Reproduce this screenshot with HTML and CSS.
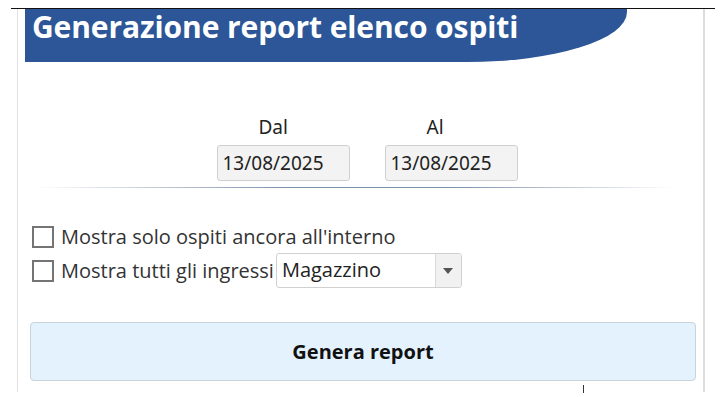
FILE: index.html
```html
<!DOCTYPE html>
<html lang="it">
<head>
  <meta charset="UTF-8">
  <meta name="viewport" content="width=device-width, initial-scale=1.0">
  <title>Generazione report elenco ospiti</title>
  <link rel="stylesheet" href="styles.css">
</head>
<body>

  <div class="topline"></div>

  <!-- Report panel -->
  <div class="panel">
    <div class="panel-header">
      <h1>Generazione report elenco ospiti</h1>
    </div>

    <div class="dates">
      <div class="date-field">
        <label for="date-from">Dal</label>
        <input type="text" id="date-from" value="13/08/2025" />
      </div>
      <div class="date-field">
        <label for="date-to">Al</label>
        <input type="text" id="date-to" value="13/08/2025" />
      </div>
    </div>

    <div class="separator"></div>

    <div class="option-row first">
      <input type="checkbox" id="only-inside" />
      <label for="only-inside">Mostra solo ospiti ancora all'interno</label>
    </div>
    <div class="option-row">
      <input type="checkbox" id="all-entries" />
      <label for="all-entries">Mostra tutti gli ingressi</label>
      <div class="select">
        <span class="select-value">Magazzino</span>
        <span class="select-arrow"></span>
      </div>
    </div>

    <button type="button" class="generate">Genera report</button>
  </div>

  <div class="tick"></div>

</body>
</html>
```

FILE: styles.css
```css
* { margin: 0; padding: 0; box-sizing: border-box; }
body {
  font-family: "Open Sans", Arial, sans-serif;
  background: white;
  color: #222;
  padding-top: 8px;
  overflow: hidden;
}
.topline {
  margin-left: 11px;
  width: 704px;
  border-top: 1px solid #111;
}
.panel {
  margin-left: 17px;
  width: 688px;
  height: 383px;
  border-left: 1px solid #e2e2e2;
  border-right: 2px solid #dcdcdc;
  padding: 0 7px;
}
.panel-header {
  width: 602px;
  height: 53px;
  background: #2c5697;
  border-bottom-right-radius: 160px 50px;
}
.panel-header h1 {
  font-size: 30px;
  font-weight: 700;
  line-height: 36px;
  color: white;
  padding-left: 7px;
  letter-spacing: -0.1px;
}
.dates {
  display: flex;
  justify-content: center;
  gap: 35px;
  margin-top: 53px;
  padding-left: 13px;
}
.date-field { display: flex; flex-direction: column; }
.date-field label {
  font-family: "Noto Sans", sans-serif;
  font-size: 19px;
  line-height: 24px;
  color: #222;
  padding-left: 42px;
}
.date-field input {
  margin-top: 6px;
  width: 133px;
  height: 36px;
  padding: 0 5px;
  font-family: "Noto Sans", sans-serif;
  font-size: 19px;
  color: #222;
  background: #f3f3f3;
  border: 1px solid #cfcfcf;
  border-radius: 3px;
}
.separator {
  margin: 6px 21px 0 10px;
  height: 1px;
  background: linear-gradient(to right, rgba(120,142,170,0), #7a90ab 40%, #7a90ab 65%, rgba(120,142,170,0));
}
.option-row {
  display: flex;
  align-items: center;
  height: 35px;
  margin-top: 6px;
  padding-left: 7px;
  font-size: 20px;
  color: #333;
}
.option-row.first { margin-top: 36px; height: 25px; margin-bottom: -2px; }
.option-row input[type="checkbox"] {
  appearance: none;
  width: 22px;
  height: 22px;
  margin-right: 7px;
  border: 2px solid #747474;
  background: white;
}
.select {
  display: flex;
  margin-left: 2px;
  width: 186px;
  height: 35px;
  border: 1px solid #d0d0d0;
  border-radius: 3px;
  overflow: hidden;
}
.select-value {
  flex: 1;
  padding-left: 5px;
  line-height: 32px;
  color: #222;
}
.select-arrow {
  width: 26px;
  background: #f1f1f1;
  border-left: 1px solid #dadada;
  display: flex;
  align-items: center;
  justify-content: center;
}
.select-arrow::after {
  content: "";
  border-left: 5px solid transparent;
  border-right: 5px solid transparent;
  border-top: 6px solid #555;
}
.generate {
  display: block;
  margin: 34px 0 0 5px;
  width: 666px;
  height: 59px;
  background: #e4f2fd;
  border: 1px solid #c9d3db;
  border-radius: 4px;
  font-family: "Open Sans", sans-serif;
  font-size: 20px;
  font-weight: 700;
  color: #111;
}
.tick {
  margin-left: 583px;
  margin-top: -7px;
  width: 1px;
  height: 8px;
  background: #333;
}
```
